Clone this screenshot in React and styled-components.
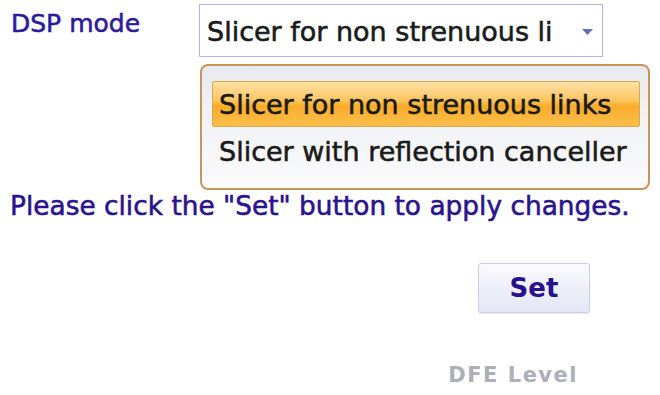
import styled, { createGlobalStyle } from 'styled-components';

const GlobalStyle = createGlobalStyle`
  html, body {
    margin: 0;
    padding: 0;
    background: #ffffff;
  }
  body {
    font-family: "DejaVu Sans", "Liberation Sans", sans-serif;
  }
`;

const Page = styled.div`
  width: 660px;
  height: 395px;
  overflow: hidden;
  box-sizing: border-box;
  padding: 4px 0 0 10px;
  display: flex;
  flex-direction: column;
`;

const FormGrid = styled.div`
  display: grid;
  grid-template-columns: 189px 451px;
  row-gap: 7px;
`;

const Label = styled.div`
  font-size: 25px;
  line-height: 30px;
  color: #2c1a9c;
  padding: 5px 0 0 1px;
  -webkit-text-stroke: 0.55px #2c1a9c;
`;

const SelectBox = styled.div`
  box-sizing: border-box;
  width: 404px;
  height: 53px;
  border: 1px solid #b3b3ee;
  background: #fff;
  display: flex;
  align-items: center;
  justify-content: space-between;
  padding: 2px 9px 0 7px;
  font-size: 27px;
  color: #1a1a1a;
  -webkit-text-stroke: 0.55px #1a1a1a;
  white-space: nowrap;
`;

const Arrow = styled.svg`
  width: 11px;
  height: 6px;
  fill: #6a6ac0;
`;

const ListBox = styled.div`
  grid-column: 2;
  margin-left: 1px;
  box-sizing: border-box;
  width: 450px;
  height: 126px;
  border: 2px solid #c8965a;
  border-radius: 8px;
  background: linear-gradient(180deg, #e7e9ee 0%, #f2f3f6 45%, #fafafb 100%);
  padding: 15px 8px 0 10px;
  display: flex;
  flex-direction: column;
`;

const Option = styled.div`
  box-sizing: border-box;
  height: ${(p) => (p.$active ? '46px' : '48px')};
  display: flex;
  align-items: center;
  padding-left: 6px;
  font-size: 27px;
  color: #1a1a1a;
  -webkit-text-stroke: 0.55px #1a1a1a;
  white-space: nowrap;
  border: 1px solid ${(p) => (p.$active ? '#d9a64a' : 'transparent')};
  border-radius: 2px;
  background: ${(p) =>
    p.$active
      ? 'linear-gradient(180deg, #fde1a6 0%, #fcc765 40%, #f9ac2a 55%, #fbbf4c 100%)'
      : 'transparent'};
`;

const Notice = styled.div`
  margin-top: 1px;
  font-size: 26.4px;
  line-height: 30px;
  color: #2a138c;
  -webkit-text-stroke: 0.55px #2a138c;
  white-space: nowrap;
`;

const ButtonRow = styled.div`
  display: flex;
  justify-content: flex-end;
  padding-right: 70px;
  margin-top: 42px;
`;

const SetButton = styled.button`
  box-sizing: border-box;
  width: 112px;
  height: 50px;
  border: 1px solid #c9cfe6;
  border-radius: 3px;
  box-shadow: 0 1px 1px rgba(150, 160, 200, 0.25);
  background: linear-gradient(180deg, #fbfbfe 0%, #eceef8 55%, #e4e7f4 100%);
  font-family: inherit;
  font-size: 26px;
  font-weight: bold;
  color: #27128c;
  padding: 0;
`;

const Caption = styled.div`
  display: flex;
  justify-content: flex-end;
  padding-right: 82px;
  margin-top: 49px;
  font-size: 21px;
  font-weight: bold;
  line-height: 26px;
  letter-spacing: 1.5px;
  color: #acaeb8;
`;

export default function App() {
  return (
    <>
      <GlobalStyle />
      <Page>
        <FormGrid>
          <Label>DSP mode</Label>
          <SelectBox>
            <span>Slicer for non strenuous li</span>
            <Arrow viewBox="0 0 11 6">
              <path d="M0 0h11L5.5 6z" />
            </Arrow>
          </SelectBox>
          <ListBox>
            <Option $active>Slicer for non strenuous links</Option>
            <Option>Slicer with reflection canceller</Option>
          </ListBox>
        </FormGrid>
        <Notice>Please click the "Set" button to apply changes.</Notice>
        <ButtonRow>
          <SetButton>Set</SetButton>
        </ButtonRow>
        <Caption>DFE Level</Caption>
      </Page>
    </>
  );
}
